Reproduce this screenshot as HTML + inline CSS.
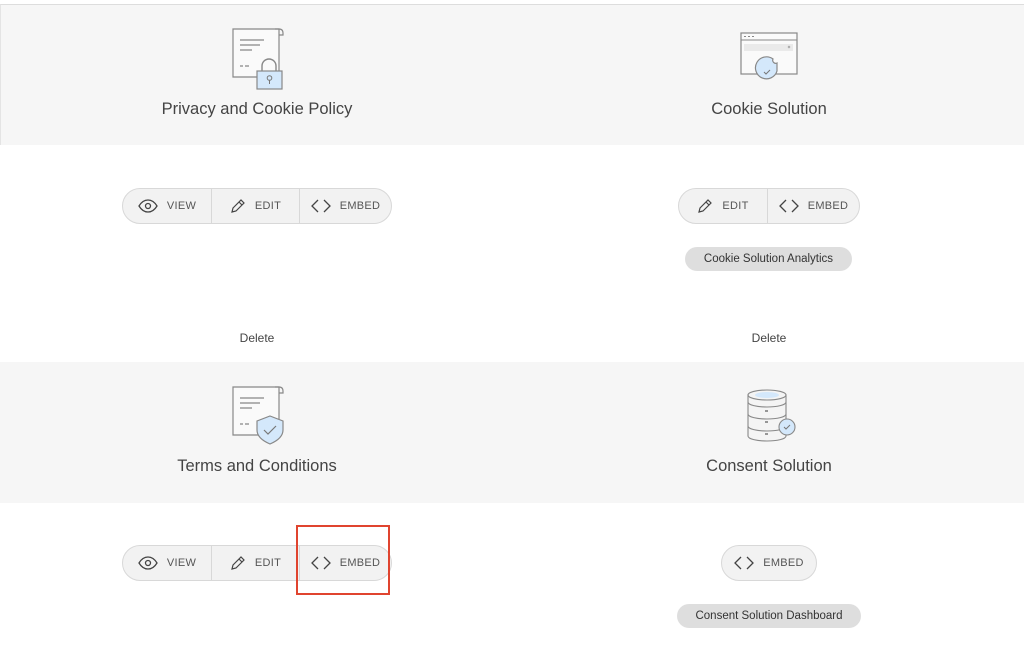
<!DOCTYPE html>
<html><head><meta charset="utf-8"><style>
*{margin:0;padding:0;box-sizing:border-box}
body{width:1024px;height:664px;overflow:hidden;background:#fff;font-family:"Liberation Sans",sans-serif;color:#444;position:relative}
.g{position:absolute;left:0;width:1024px;background:#f6f6f6}
.abs{position:absolute}
.t{position:absolute;width:512px;text-align:center;font-size:16.5px;color:#444}
.grp{position:absolute;height:36px;border:1px solid #d8d8d8;border-radius:18px;background:#f2f2f2;display:flex;overflow:hidden}
.grp div{display:flex;align-items:center;justify-content:center;font-size:11px;color:#555;letter-spacing:.3px;border-left:1px solid #d8d8d8;gap:9px}
.grp div:first-child{border-left:none}
.pill{position:absolute;height:24px;border-radius:12px;background:#dedede;font-size:11.5px;color:#333;text-align:center;line-height:24px}
.del{position:absolute;width:512px;text-align:center;font-size:12px;color:#444;top:331px}
svg{display:block}
</style></head><body>
<div class="g" style="top:4px;height:141px;border-top:1px solid #ddd;border-left:1px solid #e4e4e4"></div>
<div class="g" style="top:362px;height:141px"></div>

<svg class="abs" style="left:228px;top:26px" width="58" height="66" viewBox="0 0 58 66">
<path d="M5 3H51V51H5Z" fill="#fafafa" stroke="#888" stroke-width="1.2"/>
<path d="M47 3h4c3 0 4 2 4 4v2h-4" fill="none" stroke="#888" stroke-width="1.2"/>
<path d="M12 14h24M12 19h20M12 24h12M12 40h3M17 40h4" stroke="#888" stroke-width="1.2"/>
<path d="M34 48v-8a7 7 0 0 1 14 0v8" fill="none" stroke="#888" stroke-width="1.4"/>
<rect x="29" y="45" width="25" height="18" fill="#d4e8fb" stroke="#888" stroke-width="1.2"/>
<circle cx="41.5" cy="52" r="2.3" fill="none" stroke="#777"/><path d="M41.5 54v4" stroke="#777"/>
</svg>
<svg class="abs" style="left:739px;top:31px" width="60" height="56" viewBox="0 0 60 56">
<rect x="2" y="2" width="56" height="41" fill="#fafafa" stroke="#888" stroke-width="1.2"/>
<path d="M2 9h56" stroke="#888"/><path d="M5 5.5h2M9 5.5h2M13 5.5h2" stroke="#888"/>
<rect x="5" y="13" width="49" height="7" fill="#eaeaea"/><path d="M49 15l2 2M51 15l-2 2" stroke="#aaa"/>
<path d="M38 40a11 11 0 1 1-4-12 3 3 0 0 0 4 4z" fill="#d4e8fb" stroke="#888" stroke-width="1.2"/>
<path d="M25 41l2 2 4-4" stroke="#777" fill="none"/>
</svg>
<svg class="abs" style="left:228px;top:384px" width="58" height="62" viewBox="0 0 58 62">
<path d="M5 3H51V51H5Z" fill="#fafafa" stroke="#888" stroke-width="1.2"/>
<path d="M47 3h4c3 0 4 2 4 4v2h-4" fill="none" stroke="#888" stroke-width="1.2"/>
<path d="M12 14h24M12 19h20M12 24h12M12 40h3M17 40h4" stroke="#888" stroke-width="1.2"/>
<path d="M42 32l13 5v9c0 7-6 11-13 14-7-3-13-7-13-14v-9z" fill="#d4e8fb" stroke="#888" stroke-width="1.2"/>
<path d="M36 46l4 4 8-8" stroke="#777" fill="none" stroke-width="1.2"/>
</svg>
<svg class="abs" style="left:746px;top:388px" width="52" height="54" viewBox="0 0 52 54">
<g fill="#f4f4f4" stroke="#888" stroke-width="1.1">
<path d="M2 38v10c0 3 9 5 19 5s19-2 19-5V38"/>
<path d="M2 26v12c0 3 9 5 19 5s19-2 19-5V26"/>
<path d="M2 14v12c0 3 9 5 19 5s19-2 19-5V14"/>
<path d="M2 7v7c0 3 9 5 19 5s19-2 19-5V7"/>
<ellipse cx="21" cy="7" rx="19" ry="5"/></g>
<ellipse cx="21" cy="7" rx="12" ry="3" fill="#d4e8fb"/>
<path d="M19 23h3M19 34h3M19 46h3" stroke="#777" stroke-width="1.5"/>
<circle cx="41" cy="39" r="8" fill="#d4e8fb" stroke="#888" stroke-width="1.1"/>
<path d="M38 39l2 2 4-4" stroke="#777" fill="none"/>
</svg>

<div class="t" style="left:1px;top:100px">Privacy and Cookie Policy</div>
<div class="t" style="left:513px;top:100px">Cookie Solution</div>
<div class="t" style="left:1px;top:457px">Terms and Conditions</div>
<div class="t" style="left:513px;top:457px">Consent Solution</div>

<div class="grp" style="left:122px;top:188px;width:270px">
<div style="width:88px"><svg width="20" height="14" viewBox="0 0 20 14"><path d="M1 7C4 2 7 1 10 1s6 1 9 6c-3 5-6 6-9 6S4 12 1 7z" fill="none" stroke="#444" stroke-width="1.3"/><circle cx="10" cy="7" r="2.5" fill="none" stroke="#444" stroke-width="1.3"/></svg>VIEW</div>
<div style="width:88px"><svg width="16" height="16" viewBox="0 0 16 16"><path d="M2 14l1-4 8-8 3 3-8 8zM9 4l3 3" fill="none" stroke="#444" stroke-width="1.2"/></svg>EDIT</div>
<div style="flex:1"><svg width="20" height="14" viewBox="0 0 20 14"><path d="M7 1L1 7l6 6M13 1l6 6-6 6" fill="none" stroke="#444" stroke-width="1.3"/></svg>EMBED</div>
</div>
<div class="grp" style="left:678px;top:188px;width:182px">
<div style="width:88px"><svg width="16" height="16" viewBox="0 0 16 16"><path d="M2 14l1-4 8-8 3 3-8 8zM9 4l3 3" fill="none" stroke="#444" stroke-width="1.2"/></svg>EDIT</div>
<div style="flex:1"><svg width="20" height="14" viewBox="0 0 20 14"><path d="M7 1L1 7l6 6M13 1l6 6-6 6" fill="none" stroke="#444" stroke-width="1.3"/></svg>EMBED</div>
</div>
<div class="pill" style="left:685px;top:247px;width:167px">Cookie Solution Analytics</div>
<div class="del" style="left:1px">Delete</div>
<div class="del" style="left:513px">Delete</div>

<div class="grp" style="left:122px;top:545px;width:270px">
<div style="width:88px"><svg width="20" height="14" viewBox="0 0 20 14"><path d="M1 7C4 2 7 1 10 1s6 1 9 6c-3 5-6 6-9 6S4 12 1 7z" fill="none" stroke="#444" stroke-width="1.3"/><circle cx="10" cy="7" r="2.5" fill="none" stroke="#444" stroke-width="1.3"/></svg>VIEW</div>
<div style="width:88px"><svg width="16" height="16" viewBox="0 0 16 16"><path d="M2 14l1-4 8-8 3 3-8 8zM9 4l3 3" fill="none" stroke="#444" stroke-width="1.2"/></svg>EDIT</div>
<div style="flex:1"><svg width="20" height="14" viewBox="0 0 20 14"><path d="M7 1L1 7l6 6M13 1l6 6-6 6" fill="none" stroke="#444" stroke-width="1.3"/></svg>EMBED</div>
</div>
<div class="abs" style="left:296px;top:525px;width:94px;height:70px;border:2px solid #e0442f"></div>
<div class="grp" style="left:721px;top:545px;width:96px">
<div style="flex:1"><svg width="20" height="14" viewBox="0 0 20 14"><path d="M7 1L1 7l6 6M13 1l6 6-6 6" fill="none" stroke="#444" stroke-width="1.3"/></svg>EMBED</div>
</div>
<div class="pill" style="left:677px;top:604px;width:184px">Consent Solution Dashboard</div>
</body></html>
